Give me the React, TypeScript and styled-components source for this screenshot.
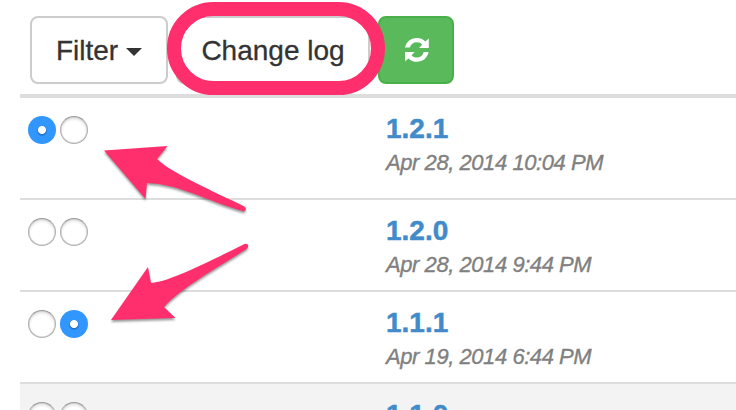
import React from "react";
import styled, { createGlobalStyle } from "styled-components";

const GlobalStyle = createGlobalStyle`
  body {
    margin: 0;
    background: #fff;
    color: #333;
    font-family: "Liberation Sans", Arial, sans-serif;
    overflow: hidden;
  }
`;

const Page = styled.main`
  position: relative;
  width: 736px;
  height: 410px;
  overflow: hidden;
`;

const Toolbar = styled.div`
  display: flex;
  gap: 8px;
  height: 94px;
  padding: 16px 0 0 30px;
  box-sizing: border-box;
`;

const Button = styled.button<{ $width: number; $primary?: boolean }>`
  display: flex;
  align-items: center;
  justify-content: center;
  gap: 8px;
  width: ${(p) => p.$width}px;
  height: 68px;
  padding: ${(p) => (p.$primary ? "0 0 0 2px" : "2px 0 0")};
  box-sizing: border-box;
  border: 2px solid ${(p) => (p.$primary ? "#49b049" : "#ccc")};
  border-radius: 8px;
  background: ${(p) => (p.$primary ? "#5ab95a" : "#fff")};
  color: ${(p) => (p.$primary ? "#fff" : "#333")};
  font: 28px/40px "Liberation Sans", Arial, sans-serif;
  -webkit-text-stroke: 0.3px currentColor;
`;

const Caret = styled.span`
  margin-top: 1px;
  border-top: 8px solid #333;
  border-left: 8px solid transparent;
  border-right: 8px solid transparent;
`;

const Highlight = styled.div`
  position: absolute;
  left: 167px;
  top: 2px;
  width: 218px;
  height: 93px;
  box-sizing: border-box;
  border: 14px solid #ff2f6d;
  border-radius: 47px;
`;

const Table = styled.section`
  margin-left: 20px;
  border-top: 4px solid #ddd;
`;

const Row = styled.div<{ $height: number; $shaded?: boolean }>`
  display: grid;
  grid-template-columns: 358px 1fr;
  height: ${(p) => p.$height}px;
  padding: 18px 0 0 8px;
  box-sizing: border-box;
  border-bottom: 2px solid #ddd;
  background: ${(p) => (p.$shaded ? "#f3f3f3" : "#fff")};
`;

const Choices = styled.div`
  display: flex;
  gap: 4px;
`;

const Radio = styled.input`
  appearance: none;
  display: block;
  width: 28px;
  height: 28px;
  margin: 0;
  box-sizing: border-box;
  border: 1px solid #b0b0b0;
  border-top-color: #999;
  border-radius: 50%;
  background: #fff;
  box-shadow: inset 0 0 0 0.5px #ccc, inset 0 2px 3px #ddd;

  &:checked {
    border: 0;
    background: radial-gradient(circle, #fff 3.6px, transparent 4.4px),
      radial-gradient(circle at 50% 54%, #2271c4 3.6px, #3197ff 5.5px);
    box-shadow: none;
  }
`;

const Version = styled.a`
  display: block;
  width: max-content;
  margin-top: -5px;
  color: #428bca;
  font-size: 28px;
  font-weight: bold;
  line-height: 36px;
  -webkit-text-stroke: 0.5px currentColor;
`;

const ReleaseDate = styled.div`
  width: max-content;
  margin-top: 1px;
  color: #808080;
  font-size: 22px;
  font-style: italic;
  line-height: 30px;
  letter-spacing: -0.44px;
  -webkit-text-stroke: 0.35px currentColor;
`;

const Arrows = styled.svg`
  position: absolute;
  left: 0;
  top: 0;
  pointer-events: none;
  filter: drop-shadow(0 2px 1px rgba(0, 0, 0, 0.4));
`;

const releases = [
  { version: "1.2.1", date: "Apr 28, 2014 10:04 PM", height: 102, selected: 0 },
  { version: "1.2.0", date: "Apr 28, 2014 9:44 PM", height: 92, selected: -1 },
  { version: "1.1.1", date: "Apr 19, 2014 6:44 PM", height: 92, selected: 1 },
  { version: "1.1.0", date: "", height: 92, selected: -1, shaded: true },
];

const RefreshIcon = () => (
  <svg width="26" height="26" viewBox="0 0 26 26" fill="#fff" aria-hidden="true">
    <path d="M1 10.5C2.3 4.700 7 1 12.800 1c3.400 0 6.300 1.200 8.500 3.400L24.800 1.500V11H15l3.200-3.300C16.800 6.100 15.100 5.300 12.800 5.300c-3.400 0-6 2-6.900 5.200Z" />
    <path d="M24.600 15C23.300 21 18.700 24.800 12.900 24.800c-3.400 0-6.200-1.200-8.400-3.400L1 24.300V15h9.800L7.500 18.200c1.400 1.500 3.200 2.300 5.400 2.300 3.400 0 5.900-2.200 6.800-5.500Z" />
  </svg>
);

export default function App() {
  return (
    <Page>
      <GlobalStyle />
      <Toolbar>
        <Button $width={138}>
          Filter
          <Caret />
        </Button>
        <Button $width={194}>Change log</Button>
        <Button $width={76} $primary aria-label="Refresh">
          <RefreshIcon />
        </Button>
      </Toolbar>
      <Table>
        {releases.map((r) => (
          <Row key={r.version} $height={r.height} $shaded={r.shaded}>
            <Choices>
              {[0, 1].map((i) => (
                <Radio key={i} type="radio" checked={r.selected === i} readOnly />
              ))}
            </Choices>
            <div>
              <Version>{r.version}</Version>
              <ReleaseDate>{r.date}</ReleaseDate>
            </div>
          </Row>
        ))}
      </Table>
      <Highlight />
      <Arrows width="736" height="410" viewBox="0 0 736 410" fill="#ff2f6d">
        <path d="M104 150.500 167.500 146 157 159C173 174 213 191 244.500 206.500Q246.500 208 245.700 210Q245 211.500 242.500 211C210 202 179 184 147 183L145.500 199Z" />
        <path d="M111 320 148 267 151 283C170 282 216 258 244.500 244Q247 243 248 245Q248.700 247 246.500 249C217 268 181 288 164 307L175.500 318Z" />
      </Arrows>
    </Page>
  );
}
